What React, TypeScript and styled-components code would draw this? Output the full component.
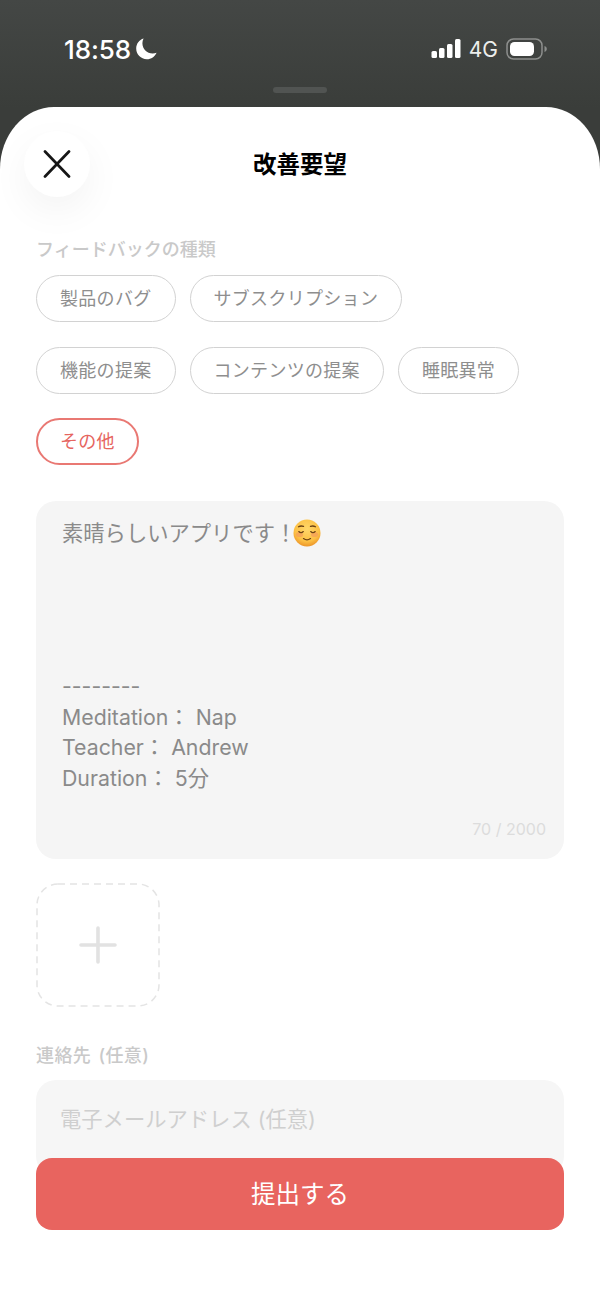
import React from "react";
import styled, { createGlobalStyle } from "styled-components";

const Global = createGlobalStyle`
  html, body { margin: 0; padding: 0; background: #fff; }
  * { box-sizing: border-box; }
`;

const FONT = `Inter, "Noto Sans CJK JP", sans-serif`;

const Screen = styled.div`
  width: 600px;
  height: 1304px;
  overflow: hidden;
  display: flex;
  flex-direction: column;
  background: linear-gradient(180deg, #444745 0%, #3a3d3a 108px);
  font-family: ${FONT};
`;

const StatusBar = styled.div`
  height: 87px;
  flex: none;
  display: flex;
  justify-content: space-between;
  align-items: flex-start;
  padding: 33px 52px 0 64px;
  color: #fff;
`;

const Group = styled.div<{ $gap: number }>`
  display: flex;
  align-items: center;
  gap: ${(p) => p.$gap}px;
  height: 32px;
`;

const Time = styled.span`
  font-size: 26px;
  font-weight: 500;
  letter-spacing: -0.1px;
`;

const Network = styled.span`
  font-size: 21px;
  font-weight: 400;
  color: #eceeec;
`;

const Handle = styled.div`
  flex: none;
  width: 54px;
  height: 6px;
  border-radius: 3px;
  background: #515452;
  margin: 0 auto 14px;
`;

const Sheet = styled.div`
  position: relative;
  flex: 1;
  background: #fff;
  border-radius: 54px 54px 0 0 / 62px 62px 0 0;
  padding: 0 36px;
  display: flex;
  flex-direction: column;
`;

const Header = styled.div`
  height: 130px;
  margin: 0 -12px;
  padding-top: 24px;
  flex: none;
  display: flex;
  align-items: flex-start;
  position: relative;
`;

const CloseButton = styled.div`
  width: 66px;
  height: 66px;
  border-radius: 50%;
  background: #fff;
  box-shadow: 0 14px 38px rgba(0, 0, 0, 0.05);
  display: flex;
  align-items: center;
  justify-content: center;
  color: #161616;
`;

const Title = styled.div`
  position: absolute;
  left: 0;
  right: 0;
  top: 41px;
  text-align: center;
  font-size: 23.5px;
  line-height: 34px;
  font-weight: 700;
  color: #000;
`;

const SectionLabel = styled.div`
  font-size: 18px;
  line-height: 26px;
  font-weight: 500;
  color: #c9c9c9;
`;

const Chips = styled.div`
  margin-top: 12px;
  display: flex;
  flex-direction: column;
  row-gap: 24.5px;
`;

const ChipRow = styled.div`
  display: flex;
  column-gap: 14px;
`;

const Chip = styled.div<{ $active?: boolean }>`
  height: 47px;
  padding: 0 ${(p) => (p.$active ? 22 : 23)}px 3px;
  border-radius: 23.5px;
  display: flex;
  align-items: center;
  font-size: 18px;
  letter-spacing: 0.3px;
  white-space: nowrap;
  background: #fff;
  border: ${(p) => (p.$active ? "2px solid #e97873" : "1px solid #d2d2d2")};
  color: ${(p) => (p.$active ? "#e6655f" : "#8e8e8e")};
`;

const TextArea = styled.div`
  position: relative;
  margin-top: 36px;
  height: 358px;
  flex: none;
  border-radius: 20px;
  background: #f5f5f5;
  padding: 17px 26px;
  font-size: 21.3px;
  line-height: 30.6px;
  color: #8a8a8a;
  white-space: pre-wrap;
`;

const Counter = styled.div`
  position: absolute;
  right: 18px;
  bottom: 19px;
  font-size: 16px;
  line-height: 22px;
  color: #dcdcdc;
`;

const EmojiIcon = styled.svg`
  display: inline-block;
  width: 28px;
  height: 28px;
  vertical-align: -6px;
  margin-left: -3px;
`;

const Upload = styled.div`
  position: relative;
  margin-top: 24px;
  width: 124px;
  height: 124px;
  flex: none;
  display: flex;
  align-items: center;
  justify-content: center;
  color: #e2e2e2;
`;

const DashedOutline = styled.svg`
  position: absolute;
  inset: 0;
`;

const ContactLabel = styled(SectionLabel)`
  margin-top: 36px;
  letter-spacing: 0.4px;
  word-spacing: 2px;
`;

const InputBox = styled.div`
  margin-top: 11px;
  height: 96px;
  flex: none;
  border-radius: 20px;
  background: #f6f6f6;
  padding: 23px 24px 0;
  font-size: 21.3px;
  line-height: 32px;
  color: #cfcfcf;
`;

const SubmitButton = styled.div`
  position: absolute;
  left: 36px;
  right: 36px;
  top: 1051px;
  height: 72px;
  padding-bottom: 3px;
  border-radius: 16px;
  background: #e8645f;
  color: #fff;
  font-size: 24.5px;
  display: flex;
  align-items: center;
  justify-content: center;
`;

const SignalIcon = () => (
  <svg width="30" height="20" viewBox="0 0 30 20" fill="#fff">
    <rect x="0.5" y="12" width="5.5" height="7" rx="1.5" />
    <rect x="8" y="9" width="5.5" height="10" rx="1.5" />
    <rect x="16" y="5" width="5.5" height="14" rx="1.5" />
    <rect x="24" y="0" width="5.5" height="19" rx="1.5" />
  </svg>
);

const BatteryIcon = () => (
  <svg width="42" height="22" viewBox="0 0 42 22">
    <rect x="1" y="1" width="35" height="20" rx="6.5" fill="none" stroke="#8d8f8d" strokeWidth="1.5" />
    <rect x="4" y="4" width="24" height="14" rx="4.5" fill="#fff" />
    <path d="M38.5 8c1.4.4 2.3 1.6 2.3 3s-.9 2.6-2.3 3z" fill="#8d8f8d" />
  </svg>
);

const MoonIcon = () => (
  <svg width="22" height="22" viewBox="0 0 22 22" fill="#fff">
    <path d="M7.6 0.6C3.2 1.9 0.2 5.9 0.2 10.6c0 5.9 4.7 10.6 10.6 10.6 4.4 0 8.2-2.7 9.8-6.5-1.2.5-2.5.7-3.9.7-5.8 0-10.3-4.5-10.3-10.2 0-1.6.4-3.2 1.2-4.6z" />
  </svg>
);

const CloseIcon = () => (
  <svg width="28" height="28" viewBox="0 0 28 28" fill="none" stroke="currentColor" strokeWidth="2.7" strokeLinecap="round">
    <path d="M2 1.5l24 25" />
    <path d="M26 1.5l-24 25" />
  </svg>
);

const PlusIcon = () => (
  <svg width="38" height="38" viewBox="0 0 38 38" fill="none" stroke="currentColor" strokeWidth="3.6" strokeLinecap="round">
    <path d="M19 2v34" />
    <path d="M2 19h34" />
  </svg>
);

const Emoji = () => (
  <EmojiIcon viewBox="0 0 28 28">
    <defs>
      <radialGradient id="face" cx="50%" cy="35%" r="70%">
        <stop offset="0%" stopColor="#ffd76a" />
        <stop offset="65%" stopColor="#fcc044" />
        <stop offset="100%" stopColor="#e88a22" />
      </radialGradient>
    </defs>
    <circle cx="14" cy="14" r="13.5" fill="url(#face)" />
    <ellipse cx="6.5" cy="15.5" rx="3.6" ry="2.6" fill="#f59a5c" opacity="0.65" />
    <ellipse cx="21.5" cy="15.5" rx="3.6" ry="2.6" fill="#f59a5c" opacity="0.65" />
    <g fill="none" stroke="#6b4215" strokeWidth="1.3" strokeLinecap="round">
      <path d="M5.5 7.8c1.6-.9 3.4-1 5-.4" />
      <path d="M22.5 7.8c-1.6-.9-3.4-1-5-.4" />
      <path d="M5.8 12.6c1.3 1.2 3.2 1.2 4.5 0" />
      <path d="M17.7 12.6c1.3 1.2 3.2 1.2 4.5 0" />
      <path d="M10.5 19.6c2.1 1.6 4.9 1.6 7 0" />
    </g>
  </EmojiIcon>
);

export default function App() {
  return (
    <Screen>
      <Global />
      <StatusBar>
        <Group $gap={5}>
          <Time>18:58</Time>
          <MoonIcon />
        </Group>
        <Group $gap={8}>
          <SignalIcon />
          <Network>4G</Network>
          <BatteryIcon />
        </Group>
      </StatusBar>
      <Handle />
      <Sheet>
        <Header>
          <CloseButton>
            <CloseIcon />
          </CloseButton>
          <Title>改善要望</Title>
        </Header>
        <SectionLabel>フィードバックの種類</SectionLabel>
        <Chips>
          <ChipRow>
            <Chip>製品のバグ</Chip>
            <Chip>サブスクリプション</Chip>
          </ChipRow>
          <ChipRow>
            <Chip>機能の提案</Chip>
            <Chip>コンテンツの提案</Chip>
            <Chip>睡眠異常</Chip>
          </ChipRow>
          <ChipRow>
            <Chip $active>その他</Chip>
          </ChipRow>
        </Chips>
        <TextArea>
          素晴らしいアプリです！<Emoji />
          {"\n\n\n\n\n--------\nMeditation： Nap\nTeacher： Andrew\nDuration： 5分"}
          <Counter>70 / 2000</Counter>
        </TextArea>
        <Upload>
          <DashedOutline width="124" height="124" viewBox="0 0 124 124" fill="none">
            <rect x="1" y="1" width="122" height="122" rx="21" stroke="#e4e4e4" strokeWidth="1.5" strokeDasharray="7 5" />
          </DashedOutline>
          <PlusIcon />
        </Upload>
        <ContactLabel>連絡先 (任意)</ContactLabel>
        <InputBox>電子メールアドレス (任意)</InputBox>
        <SubmitButton>提出する</SubmitButton>
      </Sheet>
    </Screen>
  );
}
